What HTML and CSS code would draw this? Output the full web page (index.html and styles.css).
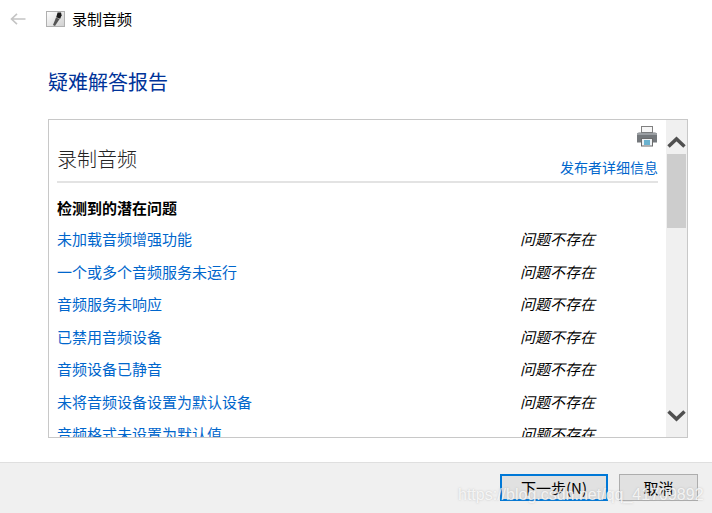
FILE: index.html
```html
<!DOCTYPE html>
<html lang="zh-CN">
<head>
<meta charset="utf-8">
<title>录制音频</title>
<link rel="stylesheet" href="styles.css">
</head>
<body>
<div class="window">
  <header class="topbar">
    <svg class="back" width="16" height="12" viewBox="0 0 16 12"><path d="M15.5 6H1.5M7 .8 1.5 6 7 11.2" fill="none" stroke="#c4c4c4" stroke-width="1.6"/></svg>
    <svg class="appicon" width="20" height="16" viewBox="0 0 20 16">
      <defs><linearGradient id="iconbg" x1="0" y1="0" x2="1" y2="1"><stop offset="0" stop-color="#ffffff"/><stop offset="1" stop-color="#cfcfcf"/></linearGradient></defs>
      <rect x=".5" y=".5" width="18" height="15" fill="url(#iconbg)" stroke="#b0b0b0"/>
      <path d="M7 14 10 6.5l3.6 1.6L9 15z" fill="#555"/>
      <path d="M10.2 6.2 11.6 1.6h3.4l.6 2.6-1.4 3.6z" fill="#1c1c1c"/>
    </svg>
    <span class="apptitle">录制音频</span>
  </header>
  <main class="content">
    <h1 class="heading">疑难解答报告</h1>
    <section class="report">
      <div class="report-body">
        <div class="printer-row">
          <svg width="22" height="21" viewBox="0 0 22 21">
            <rect x="5.5" y="0.5" width="11" height="6" fill="#f6f6f6" stroke="#808080"/>
            <path d="M1 8.5Q1 6.5 3 6.5H19Q21 6.5 21 8.5V16.5H1z" fill="#74787c"/>
            <rect x="1" y="7" width="20" height="2" fill="#9a9ea2"/>
            <rect x="5.5" y="12.5" width="11" height="7.5" fill="#eef2f5" stroke="#6a6a6a"/>
            <rect x="8" y="14" width="6" height="5" fill="#6ab2cf"/>
          </svg>
        </div>
        <div class="report-head">
          <h2 class="report-title">录制音频</h2>
          <a class="publisher">发布者详细信息</a>
        </div>
        <h3 class="section-title">检测到的潜在问题</h3>
        <ul class="issues">
          <li class="issue"><a class="issue-link">未加载音频增强功能</a><em class="issue-status">问题不存在</em></li>
          <li class="issue"><a class="issue-link">一个或多个音频服务未运行</a><em class="issue-status">问题不存在</em></li>
          <li class="issue"><a class="issue-link">音频服务未响应</a><em class="issue-status">问题不存在</em></li>
          <li class="issue"><a class="issue-link">已禁用音频设备</a><em class="issue-status">问题不存在</em></li>
          <li class="issue"><a class="issue-link">音频设备已静音</a><em class="issue-status">问题不存在</em></li>
          <li class="issue"><a class="issue-link">未将音频设备设置为默认设备</a><em class="issue-status">问题不存在</em></li>
          <li class="issue"><a class="issue-link">音频格式未设置为默认值</a><em class="issue-status">问题不存在</em></li>
        </ul>
      </div>
      <div class="scrollbar">
        <svg class="arrow" width="21" height="34" viewBox="0 0 21 34"><path d="M2.5 26.5 10.5 19 18.5 26.5" fill="none" stroke="#505050" stroke-width="3.5"/></svg>
        <div class="thumb"></div>
        <div class="track"></div>
        <svg class="arrow" width="21" height="33" viewBox="0 0 21 33"><path d="M2.5 7.5 10.5 15 18.5 7.5" fill="none" stroke="#505050" stroke-width="3.5"/></svg>
      </div>
    </section>
  </main>
  <footer class="footer">
    <button class="btn btn-primary">下一步(N)</button>
    <button class="btn btn-cancel">取消</button>
    <span class="watermark">https://blog.csdn.net/qq_41709892</span>
  </footer>
</div>
</body>
</html>
```
FILE: styles.css
```css
* { box-sizing: border-box; }
html, body { margin: 0; padding: 0; }
body {
  background: #fff;
  font-family: "Noto Sans CJK SC", "Liberation Sans", sans-serif;
  color: #000;
}
.window {
  width: 712px;
  height: 513px;
  display: flex;
  flex-direction: column;
  overflow: hidden;
}
.topbar {
  height: 38px;
  flex: none;
  display: flex;
  align-items: center;
  padding-left: 10px;
  font-size: 15px;
}
.back { margin-right: 20px; }
.appicon { margin-right: 6px; }
.apptitle { line-height: 38px; }
.content {
  flex: 1;
  min-height: 0;
  padding: 28px 24px 24px 48px;
  display: flex;
  flex-direction: column;
}
.heading {
  margin: 0 0 22px;
  font-size: 20px;
  line-height: 31px;
  font-weight: 400;
  color: #003399;
}
.report {
  height: 319px;
  flex: none;
  border: 1px solid #c8c8c8;
  display: flex;
  overflow: hidden;
}
.report-body {
  flex: 1;
  min-width: 0;
  padding: 0 8px;
}
.printer-row {
  height: 27px;
  padding-top: 6px;
  display: flex;
  justify-content: flex-end;
}
.report-head {
  height: 36px;
  border-bottom: 2px solid #e3e3e3;
  display: flex;
  justify-content: space-between;
  align-items: flex-end;
  padding-bottom: 4px;
}
.report-title {
  margin: 0 0 5px;
  font-size: 20px;
  line-height: 26px;
  font-weight: 300;
  color: #222;
}
.publisher {
  font-size: 14px;
  line-height: 20px;
  color: #0066cc;
}
.section-title {
  margin: 15px 0 0;
  font-size: 15px;
  line-height: 20px;
  font-weight: 700;
}
.issues {
  list-style: none;
  margin: 4.5px 0 0;
  padding: 0;
}
.issue {
  height: 32.5px;
  display: flex;
  align-items: center;
  font-size: 15px;
}
.issue-link {
  width: 463px;
  flex: none;
  color: #0066cc;
}
.issue-status {
  font-style: italic;
  color: #000;
}
.scrollbar {
  width: 21px;
  flex: none;
  background: #f0f0f0;
  display: flex;
  flex-direction: column;
}
.arrow { display: block; flex: none; }
.thumb {
  height: 74px;
  width: 19px;
  margin-left: 1px;
  background: #cdcdcd;
  flex: none;
}
.track { flex: 1; }
.footer {
  height: 51px;
  flex: none;
  background: #f0f0f0;
  border-top: 1px solid #dfdfdf;
  display: flex;
  justify-content: flex-end;
  align-items: flex-start;
  gap: 11px;
  padding: 11px 14px 0 0;
  position: relative;
}
.btn {
  height: 27px;
  font-family: inherit;
  font-size: 15px;
  line-height: 20px;
  color: #000;
  background: #e1e1e1;
  padding: 0;
}
.btn-primary { width: 108px; border: 2px solid #0078d7; }
.btn-cancel { width: 79px; border: 1px solid #adadad; }
.watermark {
  position: absolute;
  left: 458px;
  top: 21px;
  font-family: "Liberation Sans", sans-serif;
  font-size: 16px;
  line-height: 22px;
  white-space: nowrap;
  color: rgba(255, 255, 255, 0.8);
  text-shadow: 0 0 2px rgba(150, 150, 150, 0.55);
}
```
